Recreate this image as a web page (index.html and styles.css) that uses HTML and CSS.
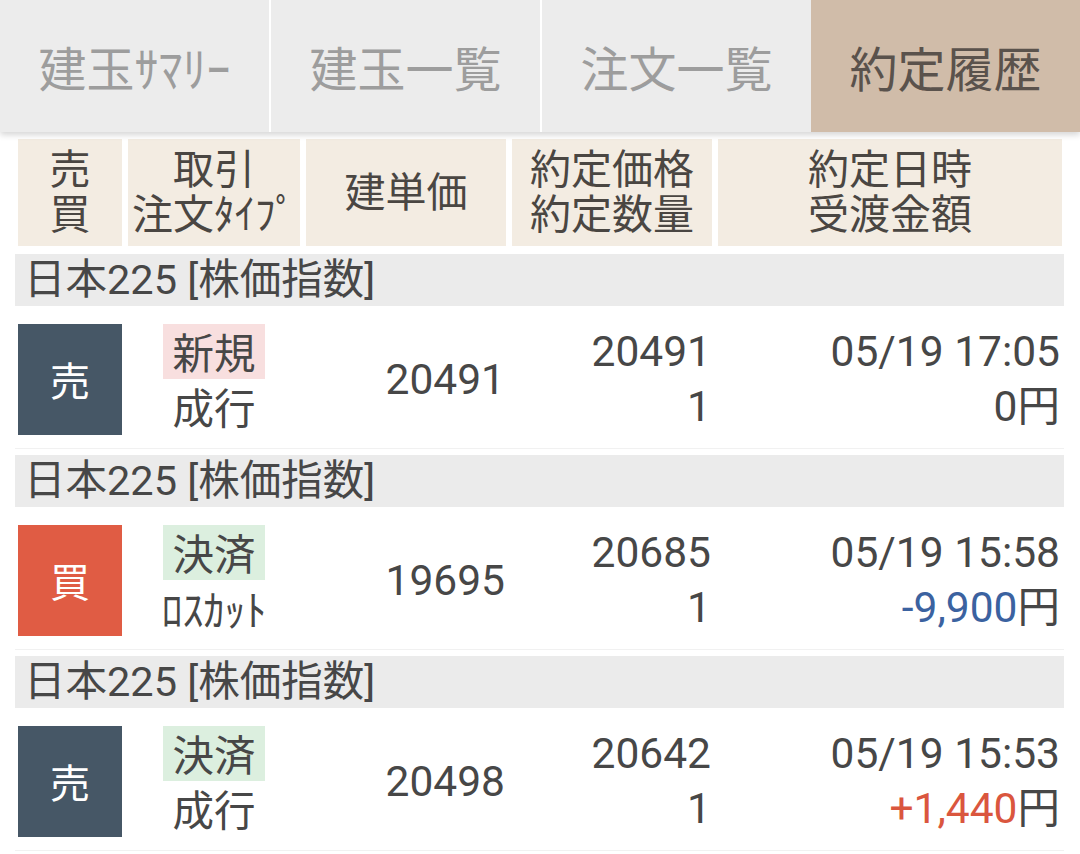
FILE: index.html
```html
<!DOCTYPE html>
<html lang="ja">
<head>
<meta charset="utf-8">
<title>約定履歴</title>
<link rel="stylesheet" href="styles.css">
</head>
<body>
<nav class="tabs">
  <div class="tab">建玉ｻﾏﾘｰ</div>
  <div class="tab">建玉一覧</div>
  <div class="tab">注文一覧</div>
  <div class="tab active">約定履歴</div>
</nav>
<main class="list">
  <div class="grid head">
    <div class="hcell"><span>売</span><span>買</span></div>
    <div class="hcell"><span>取引</span><span>注文ﾀｲﾌﾟ</span></div>
    <div class="hcell"><span>建単価</span></div>
    <div class="hcell"><span>約定価格</span><span>約定数量</span></div>
    <div class="hcell"><span>約定日時</span><span>受渡金額</span></div>
  </div>

  <div class="group">日本225 [株価指数]</div>
  <div class="grid row">
    <div class="side sell">売</div>
    <div class="type"><span class="tag new">新規</span><span>成行</span></div>
    <div class="num">20491</div>
    <div class="num two"><span>20491</span><span>1</span></div>
    <div class="num two"><span>05/19 17:05</span><span>0円</span></div>
  </div>

  <div class="group">日本225 [株価指数]</div>
  <div class="grid row">
    <div class="side buy">買</div>
    <div class="type"><span class="tag close">決済</span><span class="small">ﾛｽｶｯﾄ</span></div>
    <div class="num">19695</div>
    <div class="num two"><span>20685</span><span>1</span></div>
    <div class="num two"><span>05/19 15:58</span><span><em class="neg">-9,900</em>円</span></div>
  </div>

  <div class="group">日本225 [株価指数]</div>
  <div class="grid row">
    <div class="side sell">売</div>
    <div class="type"><span class="tag close">決済</span><span>成行</span></div>
    <div class="num">20498</div>
    <div class="num two"><span>20642</span><span>1</span></div>
    <div class="num two"><span>05/19 15:53</span><span><em class="pos">+1,440</em>円</span></div>
  </div>
</main>
</body>
</html>
```

FILE: styles.css
```css
html, body {
  margin: 0;
  padding: 0;
  background: #ffffff;
}
body {
  width: 1080px;
  height: 854px;
  overflow: hidden;
  font-family: Roboto, "Noto Sans CJK JP", sans-serif;
  color: #474747;
}

.tabs {
  display: flex;
  height: 132px;
  background: #ececec;
  box-shadow: 0 3px 6px rgba(0, 0, 0, 0.16);
  position: relative;
  z-index: 1;
}
.tab {
  flex: 1;
  display: flex;
  align-items: center;
  justify-content: center;
  font-family: "Noto Sans CJK JP", sans-serif;
  font-size: 48px;
  color: #9d9d9d;
}
.tab:nth-child(1),
.tab:nth-child(2) {
  border-right: 2px solid #ffffff;
}
.tab.active {
  background: #d0bca9;
  color: #5a524c;
}

.list {
  padding: 7px 16px 0 15px;
}

.grid {
  display: grid;
  grid-template-columns: 104px 172px 200px 200px 344px;
  column-gap: 6px;
  padding: 0 3px;
}

.head {
  height: 107px;
  margin-bottom: 8px;
}
.hcell {
  background: #f3ece2;
  color: #4a4642;
  font-family: "Noto Sans CJK JP", sans-serif;
  font-size: 41px;
  display: flex;
  flex-direction: column;
  align-items: center;
  justify-content: center;
  text-align: center;
  padding-bottom: 7px;
  box-sizing: border-box;
}
.hcell span {
  display: block;
  height: 45px;
  line-height: 45px;
}

.group {
  background: #ebebeb;
  height: 52px;
  line-height: 52px;
  padding-left: 9px;
  font-size: 41.5px;
  color: #474747;
}

.row {
  padding-top: 18px;
  padding-bottom: 13px;
  border-bottom: 1px solid #f1f1f1;
  margin-bottom: 6px;
  height: 111px;
  box-sizing: content-box;
  font-size: 42.5px;
  line-height: 55px;
}

.side {
  height: 111px;
  display: flex;
  align-items: center;
  justify-content: center;
  color: #ffffff;
  font-family: "Noto Sans CJK JP", sans-serif;
  font-size: 40px;
}
.side.sell { background: #465766; }
.side.buy { background: #e05c44; }

.type {
  display: flex;
  flex-direction: column;
  align-items: center;
  font-family: "Noto Sans CJK JP", sans-serif;
  font-size: 41.5px;
}
.tag {
  width: 102px;
  height: 55px;
  text-align: center;
}
.tag.new { background: #f8dfdf; }
.tag.close { background: #dcefdf; }
.small {
  font-size: 42px;
}

.num {
  text-align: right;
  display: flex;
  flex-direction: column;
  justify-content: center;
  padding-right: 1px;
}
.num.two {
  justify-content: flex-start;
}
.num:last-child {
  padding-right: 2px;
}
em {
  font-style: normal;
}
.neg { color: #3b62a0; }
.pos { color: #da563e; }
```
